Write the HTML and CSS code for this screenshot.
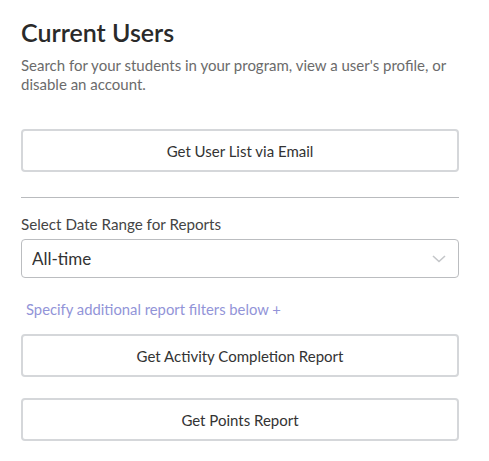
FILE: index.html
```html
<!DOCTYPE html>
<html lang="en">
<head>
  <meta charset="UTF-8">
  <title>Current Users</title>
  <meta name="viewport" content="width=device-width, initial-scale=1.0">
  <link rel="stylesheet" href="styles.css">
</head>
<body>
  <div class="panel">
    <h2>Current Users</h2>
    <p class="intro">Search for your students in your program, view a user's profile, or disable an account.</p>

    <button class="btn">Get User List via Email</button>

    <hr class="divider">

    <label class="field-label" for="range">Select Date Range for Reports</label>
    <div class="select-wrap">
      <select id="range" class="select">
        <option>All-time</option>
        <option>Last 30 days</option>
        <option>Last 7 days</option>
      </select>
      <svg class="chevron" width="14" height="8" viewBox="0 0 14 8">
        <path d="M1 1l6 5.5L13 1" fill="none" stroke="#c4c6c9" stroke-width="1.6"/>
      </svg>
    </div>

    <a class="filters-link" href="#">Specify additional report filters below +</a>

    <button class="btn">Get Activity Completion Report</button>
    <button class="btn">Get Points Report</button>
  </div>
</body>
</html>
```

FILE: styles.css
```css
body {
  margin: 0;
  background: #fff;
  color: #333;
  font-family: 'Lato', sans-serif;
}

.panel {
  width: 438px;
  margin-left: 21px;
  padding-top: 16px;
  display: flex;
  flex-direction: column;
}

h2 {
  margin: 0;
  font-size: 25px;
  line-height: 32px;
  font-weight: 600;
  color: #2a2a2a;
}

.intro {
  margin: 8px 0 0;
  font-size: 15px;
  line-height: 19px;
  color: #6b6b6b;
}

.btn {
  height: 43px;
  background: #fff;
  border: 2px solid #d5d7da;
  border-radius: 4px;
  font-family: inherit;
  font-size: 15px;
  color: #333;
  cursor: pointer;
}

.intro + .btn {
  margin-top: 35px;
}

.divider {
  margin: 25px 0 0;
  border: none;
  border-top: 1px solid #b9bbbe;
}

.field-label {
  margin-top: 17px;
  font-size: 15.2px;
  line-height: 18px;
  color: #444;
}

.select-wrap {
  position: relative;
  margin-top: 6px;
}

.select {
  width: 100%;
  height: 39px;
  padding: 0 10px;
  border: 1px solid #bbbdc0;
  border-radius: 4px;
  background: #fff;
  font-family: inherit;
  font-size: 17px;
  color: #333;
  appearance: none;
}

.chevron {
  position: absolute;
  right: 13px;
  top: 16px;
}

.filters-link {
  margin: 22px 0 0 5px;
  font-size: 14.8px;
  line-height: 18px;
  color: #9294d8;
  text-decoration: none;
}

.filters-link + .btn {
  margin-top: 16px;
}

.btn + .btn {
  margin-top: 21px;
}
```
